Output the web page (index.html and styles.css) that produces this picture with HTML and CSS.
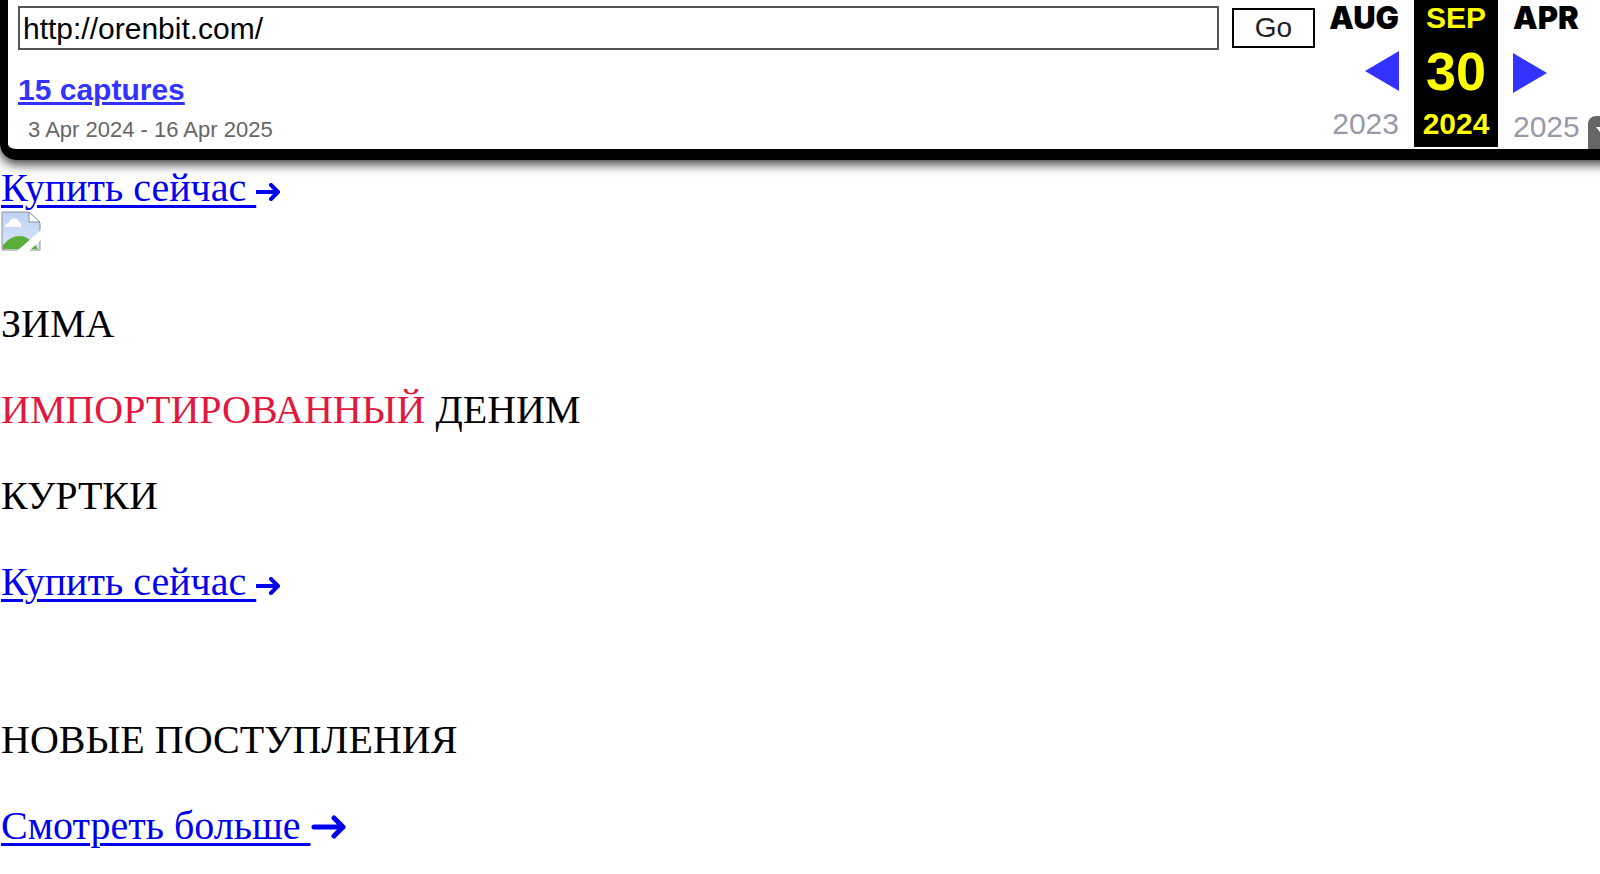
FILE: index.html
```html
<!DOCTYPE html>
<html lang="ru">
<head>
    <meta charset="UTF-8">
    <meta name="viewport" content="width=device-width, initial-scale=1.0">
    <title>orenbit.com</title>
    <link rel="stylesheet" href="styles.css">
</head>
<body>

<header class="toolbar">
    <div class="toolbar-main">
        <form class="url-form">
            <input type="text" class="url-input" aria-label="URL" value="http://orenbit.com/">
            <button type="button" class="go-button">Go</button>
        </form>
        <a href="#captures" class="captures">15 captures</a>
        <div class="range">3 Apr 2024 - 16 Apr 2025</div>
    </div>

    <div class="calendar">
        <div class="col prev">
            <span class="month">AUG</span>
            <a href="#prev" class="arrow" aria-label="Previous capture">
                <svg width="34" height="40" viewBox="0 0 34 40"><path d="M34 0v40L0 20z" fill="#33f"/></svg>
            </a>
            <span class="year">2023</span>
        </div>
        <div class="col current">
            <span class="month">SEP</span>
            <span class="day">30</span>
            <span class="year">2024</span>
        </div>
        <div class="col next">
            <span class="month">APR</span>
            <a href="#next" class="arrow" aria-label="Next capture">
                <svg width="34" height="40" viewBox="0 0 34 40"><path d="M0 0v40l34-20z" fill="#33f"/></svg>
            </a>
            <span class="year">2025</span>
        </div>
    </div>

    <button type="button" class="expand" aria-label="Expand">
        <svg width="28" height="20" viewBox="0 0 28 20"><path d="M0 0h28L14 18z" fill="#fff"/></svg>
    </button>
</header>

<main class="content">
    <div class="banner">
        <a href="#shop" class="shop-link">Купить сейчас <svg class="arrow-small" width="25" height="18" viewBox="0 0 25 18"><path d="M1 9h21M15 2l7 7-7 7" /></svg></a>
    </div>
    <div class="banner">
        <svg class="broken-image" width="40" height="40" viewBox="0 0 40 40">
            <defs>
                <linearGradient id="sky" x1="0" y1="0" x2="0" y2="1">
                    <stop offset="0" stop-color="#bdd1f4"/>
                    <stop offset="1" stop-color="#d9e6fb"/>
                </linearGradient>
            </defs>
            <path d="M1 1h27l11 11v27H1z" fill="url(#sky)" stroke="#8c8f94"/>
            <path d="M4 16c0-3 2-4 4-4 1-6 9-6 10-1 2 0 2 3 2 5z" fill="#fff"/>
            <path d="M2 38v-4c5-6 11-9 17-9s12 4 18 13z" fill="#5aad37"/>
            <path d="M28 1v10h11z" fill="#fff" stroke="#8c8f94"/>
            <path d="M16 40L40 19v10L28 40z" fill="#fff"/>
        </svg>
        <p>ЗИМА</p>
        <p><span class="accent">ИМПОРТИРОВАННЫЙ</span> ДЕНИМ</p>
        <p>КУРТКИ</p>
        <a href="#shop" class="shop-link">Купить сейчас <svg class="arrow-small" width="25" height="18" viewBox="0 0 25 18"><path d="M1 9h21M15 2l7 7-7 7" /></svg></a>
    </div>
    <section class="arrivals">
        <p>НОВЫЕ ПОСТУПЛЕНИЯ</p>
        <a href="#more" class="shop-link">Смотреть больше <svg class="arrow-big" width="36" height="24" viewBox="0 0 36 24"><path d="M3 12h29M23 3l9 9-9 9" /></svg></a>
    </section>
</main>

</body>
</html>
```
FILE: styles.css
```css
body {
    font-family: "Liberation Serif", "Times New Roman", serif;
    font-size: 40px;
    line-height: 46px;
    color: #000;
    background-color: #fff;
    margin: 0;
    overflow: hidden;
}
a {
    color: #0000ee;
}
p {
    margin: 40px 0;
}

/* toolbar */
.toolbar {
    display: flex;
    margin-right: -16px;
    padding-right: 16px;
    border-left: 8px solid #000;
    border-bottom: 11px solid #000;
    border-bottom-left-radius: 16px;
    box-shadow: 0 4px 12px rgba(0, 0, 0, 0.8);
    font-family: "Liberation Sans", Arial, sans-serif;
    font-size: 30px;
    line-height: 36px;
}
.toolbar-main {
    flex: 1;
    padding: 6px 13px 0 10px;
}
.url-form {
    display: flex;
    align-items: center;
    gap: 13px;
    margin-bottom: 22px;
}
.url-input {
    flex: 1;
    min-width: 0;
    height: 44px;
    box-sizing: border-box;
    padding: 2px 3px 0;
    border: 2px solid #555;
    font: inherit;
    color: #000;
}
.go-button {
    width: 83px;
    height: 40px;
    padding: 0;
    border: 2px solid #000;
    background-color: #fff;
    font: inherit;
    font-size: 28px;
    color: #222;
}
.captures {
    display: block;
    width: max-content;
    font-weight: bold;
    color: #33f;
}
.range {
    padding-left: 10px;
    margin-top: 4px;
    font-size: 22px;
    color: #666;
}
.calendar {
    display: flex;
}
.col {
    display: flex;
    flex-direction: column;
    justify-content: space-between;
    width: 84px;
    height: 147px;
    margin-bottom: 2px;
}
.month {
    font-weight: bold;
}
.arrow {
    line-height: 0;
}
.prev, .next {
    width: 71px;
}
.prev {
    align-items: flex-end;
    margin-right: 15px;
}
.next {
    align-items: flex-start;
    margin-left: 15px;
}
.prev .month, .next .month {
    font-family: Inter, sans-serif;
    font-size: 31px;
    font-weight: 900;
}
.prev .year, .next .year {
    color: #99a;
}
.prev .year {
    padding-bottom: 5px;
}
.next .year {
    padding-bottom: 2px;
}
.current {
    align-items: center;
    background-color: #000;
    color: #ff0;
    font-weight: bold;
}
.day {
    font-size: 54px;
    line-height: 64px;
}
.current .year {
    padding-bottom: 5px;
}
.expand {
    width: 12px;
    height: 33px;
    align-self: flex-end;
    margin-left: 4px;
    padding: 8px 0 0 8px;
    border: none;
    border-top-left-radius: 8px;
    background-color: #666;
    overflow: hidden;
    text-align: left;
    line-height: 0;
}

/* page */
.content {
    padding: 5px 1px;
}
.shop-link {
    text-decoration-thickness: 3px;
    text-underline-offset: 4px;
}
.accent {
    color: #e3173e;
}
.broken-image {
    display: block;
    margin-bottom: 50px;
}
.arrow-small, .arrow-big {
    fill: none;
    stroke: #0000ee;
    stroke-width: 4;
    stroke-linecap: round;
    stroke-linejoin: round;
}
.arrow-big {
    stroke-width: 5;
}
.arrivals {
    margin-top: 112px;
}
```
